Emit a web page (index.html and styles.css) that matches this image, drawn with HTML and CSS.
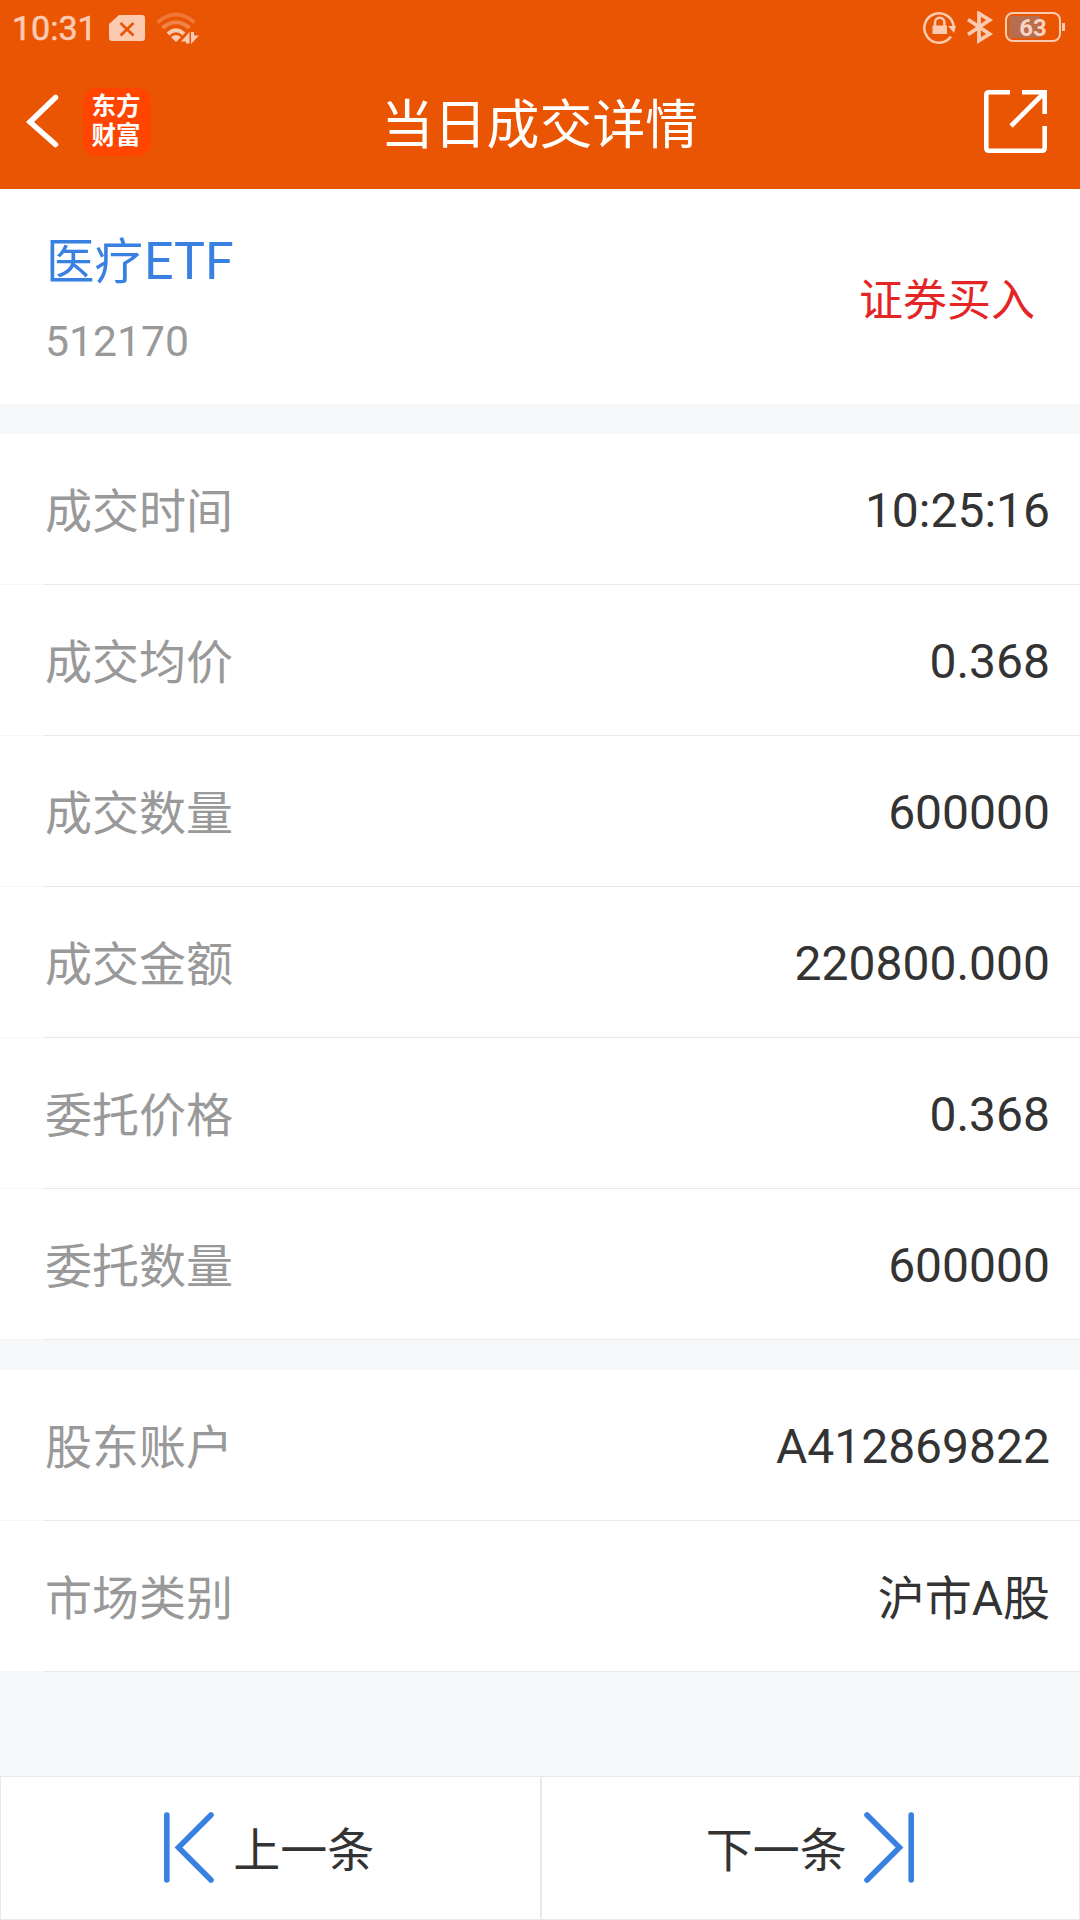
FILE: index.html
```html
<!DOCTYPE html>
<html lang="zh-CN">
<head>
    <meta charset="UTF-8">
    <meta name="viewport" content="width=device-width, initial-scale=1.0">
    <title>当日成交详情</title>
    <link rel="stylesheet" href="styles.css">
</head>
<body>
    <div class="page">
        <header>
            <div class="status-bar">
                <span class="clock">10:31</span>
                <svg class="sim-icon" width="36" height="26" viewBox="0 0 36 26">
                    <path fill="#fbcab1" d="M10 0H33a3 3 0 0 1 3 3V23a3 3 0 0 1-3 3H3a3 3 0 0 1-3-3V9Z"/>
                    <path stroke="#ea5504" stroke-width="2.6" d="M11.500 8L24.500 20.500M24.500 8L11.500 20.500"/>
                </svg>
                <svg class="wifi-icon" width="44" height="34" viewBox="0 0 44 34">
                    <g fill="none" stroke="#fbcab1" stroke-width="4">
                        <path opacity=".3" d="M1.500 11.500Q20 -4.500 38.500 11.500"/>
                        <path opacity=".4" d="M6.500 17Q20 5.500 33.500 17"/>
                        <path d="M12 23Q20 15.500 28 23"/>
                    </g>
                    <path fill="#fbcab1" d="M15 26Q20 22 25 26L20 31ZM25 30.500L33.500 21V32.500H30V30.500ZM35 21H38V24.500H43L35 33Z"/>
                </svg>
                <div class="status-right">
                    <svg width="34" height="34" viewBox="0 0 34 34">
                        <path fill="none" stroke="#fbcab1" stroke-width="2.500" d="M28 25.500A14.700 14.700 0 1 1 30.700 16"/>
                        <path fill="#fbcab1" d="M25 15H33L31 22ZM9.500 14.500H24V23H9.500Z"/>
                        <path fill="none" stroke="#fbcab1" stroke-width="2.500" d="M12 15V11.500a4.700 4.700 0 0 1 9.400 0V15"/>
                    </svg>
                    <svg class="bluetooth-icon" width="26" height="34" viewBox="0 0 26 34">
                        <path fill="none" stroke="#fbcab1" stroke-width="3.800" d="M1 8.500L22.500 23L12 29.500V2.500L22.500 9L1 23.500"/>
                    </svg>
                    <div class="battery"><span>63</span></div>
                </div>
            </div>
            <div class="nav-bar">
                <div class="nav-left">
                    <svg width="34" height="56" viewBox="0 0 34 56">
                        <path fill="none" stroke="#fff" stroke-width="5.500" stroke-linecap="round" d="M30.500 3.500L5 28L30.500 50.500"/>
                    </svg>
                    <div class="logo">东方<br>财富</div>
                </div>
                <h1>当日成交详情</h1>
                <svg class="share-icon" width="64" height="64" viewBox="0 0 64 64">
                    <path fill="none" stroke="#fff" stroke-width="4.600" d="M26 2.300H5Q2.300 2.300 2.300 5V58Q2.300 60.700 5 60.700H58Q60.700 60.700 60.700 58V36M38 2.300H60.700V24M60 3L27 36"/>
                </svg>
            </div>
        </header>

        <div class="summary">
            <div>
                <div class="stock-name">医疗<span>ETF</span></div>
                <div class="stock-code">512170</div>
            </div>
            <div class="trade-type">证券买入</div>
        </div>

        <div class="section">
            <div class="row"><span class="label">成交时间</span><span class="value">10:25:16</span></div>
            <div class="row"><span class="label">成交均价</span><span class="value">0.368</span></div>
            <div class="row"><span class="label">成交数量</span><span class="value">600000</span></div>
            <div class="row"><span class="label">成交金额</span><span class="value">220800.000</span></div>
            <div class="row"><span class="label">委托价格</span><span class="value">0.368</span></div>
            <div class="row"><span class="label">委托数量</span><span class="value">600000</span></div>
        </div>

        <div class="section">
            <div class="row"><span class="label">股东账户</span><span class="value">A412869822</span></div>
            <div class="row"><span class="label">市场类别</span><span class="value market"><span>沪市</span>A<span>股</span></span></div>
        </div>

        <footer>
            <div class="pager prev">
                <svg width="50" height="72" viewBox="0 0 50 72">
                    <path fill="none" stroke="#3881e0" stroke-width="5.600" stroke-linecap="round" d="M2.800 3V68M47 3L14.500 35.500L47 68"/>
                </svg>
                <span>上一条</span>
            </div>
            <div class="pager next">
                <span>下一条</span>
                <svg width="50" height="72" viewBox="0 0 50 72">
                    <path fill="none" stroke="#3881e0" stroke-width="5.600" stroke-linecap="round" d="M47.200 3V68M3 3L35.500 35.500L3 68"/>
                </svg>
            </div>
        </footer>
    </div>
</body>
</html>
```
FILE: styles.css
```css
* {
    box-sizing: border-box;
}

body {
    margin: 0;
    font-family: Roboto, "Noto Sans CJK SC", sans-serif;
    background-color: #f7f8fa;
    color: #333;
}

svg {
    display: block;
    flex-shrink: 0;
}

.page {
    display: flex;
    flex-direction: column;
    height: 1920px;
}

header {
    height: 189px;
    background-color: #ea5504;
}

.status-bar {
    display: flex;
    align-items: flex-start;
    height: 60px;
    padding: 11px 15px 0 12px;
}

.clock {
    width: 97px;
    font-size: 34px;
    line-height: 35px;
    color: #fbcab1;
    -webkit-text-stroke: 0.6px #fbcab1;
}

.sim-icon {
    margin-top: 4px;
}

.wifi-icon {
    margin-left: 11px;
}

.status-right {
    display: flex;
    margin-left: auto;
}

.bluetooth-icon {
    margin-left: 10px;
}

.battery {
    position: relative;
    width: 56px;
    height: 30px;
    margin: 1px 4px 0 12px;
    border: 2px solid #fbcab1;
    border-radius: 8px;
    background: linear-gradient(#b86d4c, #b86d4c) 2px 2px / 31px 22px no-repeat;
    font-size: 24px;
    font-weight: 700;
    line-height: 28px;
    text-align: center;
    color: #f6d5c6;
}

.battery::after {
    content: "";
    position: absolute;
    top: 9px;
    right: -6px;
    width: 3px;
    height: 8px;
    background-color: #fbcab1;
}

.nav-bar {
    display: grid;
    grid-template-columns: 1fr auto 1fr;
    align-items: center;
    height: 124px;
    padding: 0 32px 0 25px;
}

.nav-left {
    display: flex;
    align-items: center;
    gap: 24px;
}

.logo {
    width: 68px;
    height: 68px;
    padding: 4px 2px 0 0;
    border-radius: 14px;
    background-color: #ff4500;
    font-size: 24.5px;
    font-weight: 700;
    line-height: 29px;
    text-align: center;
    color: #fff;
}

h1 {
    margin: 0;
    padding: 8px 0 0 6px;
    font-size: 52.9px;
    font-weight: 400;
    line-height: 64px;
    color: #fff;
}

.share-icon {
    justify-self: end;
}

.summary {
    display: flex;
    justify-content: space-between;
    height: 215px;
    padding: 39px 45px 0 45px;
    background-color: #fff;
}

.stock-name {
    padding-left: 1px;
    font-size: 48.5px;
    line-height: 68px;
    color: #3881e0;
}

.stock-name span {
    margin-left: 1px;
    font-size: 52px;
}

.stock-code {
    margin-top: 18px;
    font-size: 42.7px;
    line-height: 52px;
    color: #999;
}

.trade-type {
    margin-top: 41px;
    font-size: 44px;
    line-height: 64px;
    color: #e52525;
}

.section {
    margin-top: 30px;
    background-color: #fff;
}

.row {
    display: flex;
    align-items: center;
    justify-content: space-between;
    height: 151px;
    padding: 0 30px 0 45px;
    border-bottom: 1px solid;
    border-image: linear-gradient(to right, #f7f7f7 45px, #e9e9e9 45px) 1;
}

.label {
    padding-bottom: 3px;
    font-size: 47px;
    color: #999;
}

.value {
    padding-top: 2px;
    font-size: 48px;
}

.market {
    padding: 0 0 4px;
}

.market span {
    font-size: 47px;
}

footer {
    display: flex;
    height: 144px;
    margin-top: auto;
}

.pager {
    display: flex;
    flex: 1;
    align-items: center;
    justify-content: center;
    gap: 18px;
    border: 1px solid #e9e9e9;
    background-color: #fff;
    font-size: 47px;
}

.prev {
    padding-right: 2px;
    gap: 19px;
}

.next {
    padding-right: 1px;
    gap: 17px;
}

.pager span {
    padding-bottom: 4px;
}
```
